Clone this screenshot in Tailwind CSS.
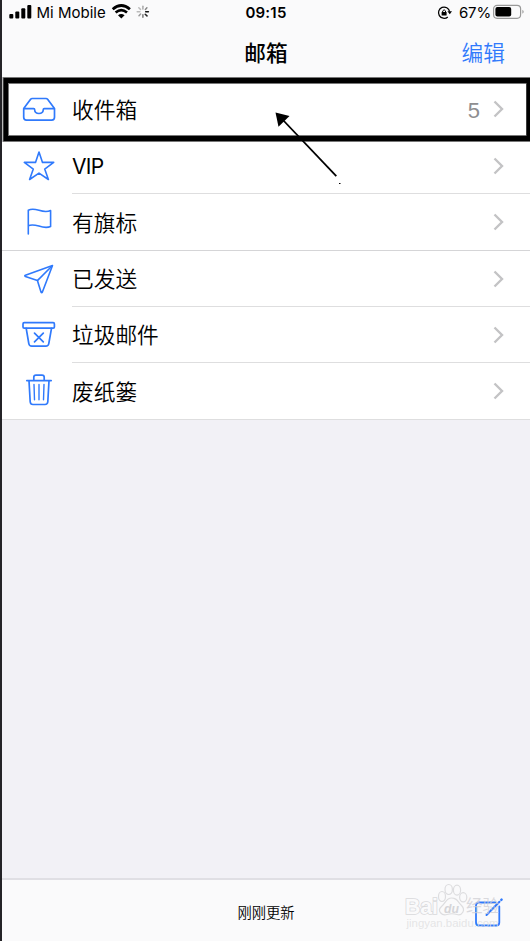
<!DOCTYPE html>
<html lang="zh-CN">
<head>
<meta charset="utf-8">
<title>邮箱</title>
<script src="https://cdn.jsdelivr.net/npm/@tailwindcss/browser@4"></script>
</head>
<body class="bg-[#f2f1f6]">
<div class="relative flex h-[941px] w-[530px] flex-col overflow-hidden border-l-2 border-[#242327] bg-[#f2f1f6] font-['Inter','Noto_Sans_CJK_SC',sans-serif] text-black">
  <header class="h-[81px] shrink-0 bg-[#fafafb]">
    <div class="grid h-[26px] grid-cols-[1fr_auto_1fr] items-center text-[15px] leading-[26px]">
      <div class="flex items-center">
        <svg class="ml-[7px] h-[26px] w-[23px]" viewBox="9 0 23 26"><rect x="9.3" y="14" width="4" height="4.5" rx="1"/><rect x="15.3" y="11.5" width="4" height="7" rx="1"/><rect x="21.3" y="8.3" width="4" height="10.2" rx="1"/><rect x="27.3" y="5" width="4" height="13.5" rx="1"/></svg>
        <span class="ml-[4.5px] w-[70.5px] whitespace-nowrap text-[15px]">Mi Mobile</span>
        <svg class="ml-[4px] h-[26px] w-[42px]" viewBox="111 0 42 26" fill="none" stroke="#000">
          <path d="M112.7 9.2Q121.3 1.8 129.9 9.2" stroke-width="2.8"/><path d="M115.6 12.6Q121.3 7.6 127 12.6" stroke-width="2.6"/><path d="M118 15.3Q121.3 12.6 124.6 15.3L121.3 18.5Z" fill="#000" stroke="none"/>
          <g stroke-width="1.5" stroke-linecap="round"><path d="M142.9 6.2V8.9" stroke="#aaa"/><path d="M146.9 7.8L145.4 9.4" stroke="#888"/><path d="M148.4 11.8H145.7" stroke="#111"/><path d="M147 15.9L145.2 14.2" stroke="#222"/><path d="M142.9 17.3V14.7" stroke="#777"/><path d="M139 15.8L140.6 14.1" stroke="#999"/><path d="M137.2 11.8H139.9" stroke="#bbb"/><path d="M138.8 7.8L140.5 9.4" stroke="#bbb"/></g>
        </svg>
      </div>
      <span class="text-[15px] font-semibold tracking-[0.2px]">09:15</span>
      <div class="flex items-center justify-end">
        <svg class="h-[26px] w-[16px]" viewBox="438 0 16 26" fill="none" stroke="#000" stroke-width="1.3"><path d="M448.8 16.9A5.6 5.6 0 1 1 450.6 11.6"/><path d="M448.4 11.2H453L450.8 14.2Z" fill="#000" stroke="none"/><rect x="442.6" y="11.9" width="5" height="3.7" rx=".5" fill="#000" stroke="none"/><path d="M443.7 12V10.9Q445.1 8.6 446.5 10.9V12" stroke-width="1"/></svg>
        <span class="ml-[6px] w-[33px] whitespace-nowrap text-[15px] tracking-[-0.2px]">67%</span>
        <svg class="mr-[5px] h-[26px] w-[33px]" viewBox="492 0 33 26"><rect x="493.6" y="5.3" width="27" height="13" rx="3.5" fill="none" stroke="#999" stroke-width="1.2"/><rect x="495.4" y="7.1" width="15.8" height="9.4" rx="2"/><path d="M522.4 9.8Q525 11.8 522.4 13.8Z" fill="#999"/></svg>
      </div>
    </div>
    <div class="grid h-[54px] grid-cols-3 items-center text-[21.7px] leading-[54px]">
      <h1 class="col-start-2 text-center font-medium">邮箱</h1>
      <span class="pr-[25px] text-right font-[350] text-[#3079fc]">编辑</span>
    </div>
  </header>

  <main class="shrink-0 bg-white text-[21.7px] font-[350]">
    <div class="flex h-[56px] items-center">
      <svg class="h-[56px] w-[70px] shrink-0" viewBox="2 81 70 56" fill="none" stroke="#307afc" stroke-width="1.7" stroke-linejoin="round" stroke-linecap="round"><path d="M23.7 108.6L30.6 99.2Q31.2 98.5 32.2 98.5H46Q47 98.5 47.6 99.2L54.5 108.6V117.3Q54.5 120.1 51.7 120.1H26.5Q23.7 120.1 23.7 117.3V108.6H33.8Q34.6 108.6 34.6 109.5C34.9 114.8 43 114.8 43.3 109.5Q43.3 108.6 44.2 108.6H54.5"/></svg>
      <span class="flex-1 pt-[3px]">收件箱</span><span class="mr-[13px] pt-[2px] font-['Liberation_Sans'] text-[22px] font-normal text-[#8e8e90]">5</span>
      <svg class="mr-[25px] h-[18px] w-[12px]" viewBox="0 0 12 18" fill="none" stroke="#c3c3c5" stroke-width="2.4"><path d="M1.5 1.5L9 9L1.5 16.5"/></svg>
    </div>
    <div class="flex h-[57px]">
      <svg class="h-[57px] w-[70px] shrink-0" viewBox="2 137 70 57" fill="none" stroke="#307afc" stroke-width="1.6" stroke-linejoin="round"><path d="M39 152L42.5 162.4H53.7L44.7 169.1L48.4 179.5L39 173.1L29.6 179.5L33.3 169.1L24.3 162.4H35.5Z"/></svg>
      <div class="flex flex-1 items-center border-b border-[#dededf] pt-px"><span class="flex-1 pt-[2px] text-[21px] font-normal tracking-[-0.7px]">VIP</span><svg class="mr-[25px] h-[18px] w-[12px]" viewBox="0 0 12 18" fill="none" stroke="#c3c3c5" stroke-width="2.4"><path d="M1.5 1.5L9 9L1.5 16.5"/></svg></div>
    </div>
    <div class="flex h-[57px] border-b border-[#d5d5d7]">
      <svg class="h-[57px] w-[70px] shrink-0" viewBox="2 194 70 57" fill="none" stroke="#307afc" stroke-width="1.6" stroke-linejoin="round" stroke-linecap="round"><path d="M28.3 234V210.2C36 206.2 42 214.5 50.6 210.5V226.5C42 230.2 36 222.2 28.3 225.7"/></svg>
      <div class="flex flex-1 items-center"><span class="flex-1 pt-[2px]">有旗标</span><svg class="mr-[25px] h-[18px] w-[12px]" viewBox="0 0 12 18" fill="none" stroke="#c3c3c5" stroke-width="2.4"><path d="M1.5 1.5L9 9L1.5 16.5"/></svg></div>
    </div>
    <div class="flex h-[56px]">
      <svg class="h-[56px] w-[70px] shrink-0" viewBox="2 251 70 56" fill="none" stroke="#307afc" stroke-width="1.6" stroke-linejoin="round"><path d="M52.5 265.5L25.4 275.2Q24.2 275.8 25.4 276.5L37.4 280.6L41 292Q41.7 293.2 42.4 292Z"/><path d="M52.5 265.5L37.4 280.6"/></svg>
      <div class="flex flex-1 items-center border-b border-[#dededf]"><span class="flex-1 pt-[2px]">已发送</span><svg class="mr-[25px] h-[18px] w-[12px]" viewBox="0 0 12 18" fill="none" stroke="#c3c3c5" stroke-width="2.4"><path d="M1.5 1.5L9 9L1.5 16.5"/></svg></div>
    </div>
    <div class="flex h-[56px]">
      <svg class="h-[56px] w-[70px] shrink-0" viewBox="2 307 70 56" fill="none" stroke="#307afc" stroke-width="1.7" stroke-linejoin="round" stroke-linecap="round"><rect x="23" y="322.7" width="31.4" height="5.4" rx="1.2"/><path d="M26.2 328.3L28.8 343.5Q29.2 346.2 31.8 346.2H45.8Q48.4 346.2 48.8 343.5L51.5 328.3"/><path d="M34.5 333.2L43.3 341.9M43.3 333.2L34.5 341.9"/></svg>
      <div class="flex flex-1 items-center border-b border-[#dededf]"><span class="flex-1 pt-[2px]">垃圾邮件</span><svg class="mr-[25px] h-[18px] w-[12px]" viewBox="0 0 12 18" fill="none" stroke="#c3c3c5" stroke-width="2.4"><path d="M1.5 1.5L9 9L1.5 16.5"/></svg></div>
    </div>
    <div class="flex h-[57px] border-b border-[#dededf]">
      <svg class="h-[57px] w-[70px] shrink-0" viewBox="2 363 70 57" fill="none" stroke="#307afc" stroke-width="1.7" stroke-linejoin="round" stroke-linecap="round"><path d="M26.8 380.6H51.2M33.8 380.4V377.3Q33.8 375.1 36 375.1H42Q44.2 375.1 44.2 377.3V380.4M29 380.8L30.2 401.8Q30.4 404.5 33 404.5H45Q47.6 404.5 47.8 401.8L49 380.8"/><path d="M34 384.5L34.5 399.8M39 384.5V399.8M44 384.5L43.5 399.8" stroke-width="1.4"/></svg>
      <div class="flex flex-1 items-center"><span class="flex-1 pt-[2px]">废纸篓</span><svg class="mr-[25px] h-[18px] w-[12px]" viewBox="0 0 12 18" fill="none" stroke="#c3c3c5" stroke-width="2.4"><path d="M1.5 1.5L9 9L1.5 16.5"/></svg></div>
    </div>
  </main>

  <footer class="relative mt-auto flex h-[63px] items-center justify-center border-t-2 border-[#e0dfe4] bg-[#fafafb] pt-[4px] text-[14.3px] font-[350]">
    <span>刚刚更新</span>
    <svg class="absolute -top-px right-0 h-[62px] w-[130px]" viewBox="400 879 130 62">
      <g fill="none" stroke="#307afc" stroke-width="1.8" stroke-linecap="round"><path d="M495.5 902.5H479Q476 902.5 476 905.5V922.5Q476 925.5 479 925.5H496.3Q499.3 925.5 499.3 922.5V906.5"/><path d="M486.5 915L499.5 901.8" stroke-width="2"/><path d="M501.3 899.9L501.6 899.6" stroke-width="2.4"/></g>
      <g fill="#fafafb" stroke="#d9d9dc" stroke-width="1.6" paint-order="stroke" font-family="Liberation Sans, Noto Sans CJK SC, sans-serif" font-weight="bold">
        <text x="405" y="913.5" font-size="21.5" textLength="33" lengthAdjust="spacingAndGlyphs">Bai</text>
        <text x="466" y="912" font-size="16.5" stroke="none" font-weight="normal" fill="#cfcfd4" fill-opacity=".75">经验</text>
        <text x="406.5" y="926.5" font-size="11" font-weight="normal" stroke="none" fill="#dfdfe1" fill-opacity=".8" textLength="92" lengthAdjust="spacingAndGlyphs">jingyan.baidu.com</text>
      </g>
      <g fill="#fafafb" stroke="#dddddf" stroke-width="1.2">
        <ellipse cx="442" cy="896.5" rx="3.5" ry="5"/><ellipse cx="448.7" cy="889.5" rx="3.7" ry="5"/><ellipse cx="457" cy="890.2" rx="3.6" ry="5"/><ellipse cx="463.2" cy="897.3" rx="3.6" ry="4.6"/>
        <path d="M451.5 898C446 898 446 903 441.5 906.5C436.5 911 442 916 447 914.5Q452 913 457 914.5C462 916 466 910 461.5 905.5C457 901 457 898 451.5 898Z"/>
      </g>
      <text x="444" y="912.5" font-family="Liberation Sans, sans-serif" font-weight="bold" font-size="13" font-style="italic" textLength="15" lengthAdjust="spacingAndGlyphs" fill="#d5d5d8">du</text>
    </svg>
  </footer>

  <svg class="pointer-events-none absolute left-0 top-[70px] h-[120px] w-[528px]" viewBox="2 70 528 120" fill="none">
    <path d="M2.5 77H532V142H2.5ZM9 84V135H526V84Z" fill="#777" fill-rule="evenodd"/>
    <path d="M3.5 78H532V141H3.5ZM8 83V136H526.5V83Z" fill="#000" fill-rule="evenodd"/>
    <path d="M282 119L336.3 176.2" stroke="#000" stroke-width="1.8"/>
    <path d="M275.5 112.5L289.5 116L278.5 126.8Z" fill="#000"/>
    <rect x="339" y="183" width="1.5" height="1" fill="#000"/>
  </svg>
</div>
</body>
</html>
